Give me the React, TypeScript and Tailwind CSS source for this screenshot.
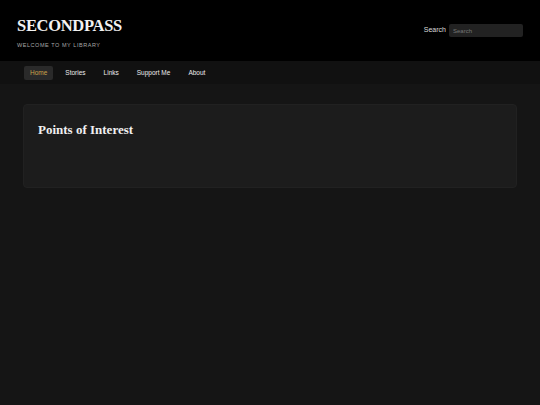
import React from "react";

const navItems = ["Home", "Stories", "Links", "Support Me", "About"];

export default function App() {
  return (
    <div className="min-h-[405px] bg-[#151515] font-['Liberation_Sans',Arial,sans-serif]">
      <header className="h-[61px] bg-black flex items-start justify-between px-[17px]">
        <div className="flex flex-col pt-[17px]">
          <h1 className="font-['Liberation_Serif',serif] font-bold text-[16.5px] leading-[18px] text-[#f2f2f2] tracking-[-0.3px]">
            SECONDPASS
          </h1>
          <p className="text-[5.5px] leading-[7px] tracking-[0.55px] text-[#a8a8a8] mt-[7px]">
            WELCOME TO MY LIBRARY
          </p>
        </div>
        <div className="flex items-center gap-[3px] pt-[24px]">
          <span className="text-[7px] text-[#dcdcdc]">Search</span>
          <input
            placeholder="Search"
            className="w-[74px] h-[13px] bg-[#222] rounded-[2px] px-[4px] text-[6px] text-[#ccc] placeholder:text-[#777] outline-none"
          />
        </div>
      </header>
      <nav className="h-[23px] bg-[#111] flex items-center pl-[24px] gap-[6px]">
        {navItems.map((item, i) => (
          <a
            key={item}
            className={
              i === 0
                ? "h-[14px] px-[6px] flex items-center rounded-[2px] bg-[#2a2a2a] text-[#c9a24a] text-[6.5px]"
                : "h-[14px] px-[6px] flex items-center text-[6.5px] text-[#ececec]"
            }
          >
            {item}
          </a>
        ))}
      </nav>
      <main className="px-[23px] pt-[20px]">
        <div className="h-[84px] bg-[#1c1c1c] border border-[#212121] rounded-[4px] px-[14px] pt-[15px]">
          <h2 className="font-['Liberation_Serif',serif] font-bold text-[13px] text-[#f0f0f0]">
            Points of Interest
          </h2>
        </div>
      </main>
    </div>
  );
}
